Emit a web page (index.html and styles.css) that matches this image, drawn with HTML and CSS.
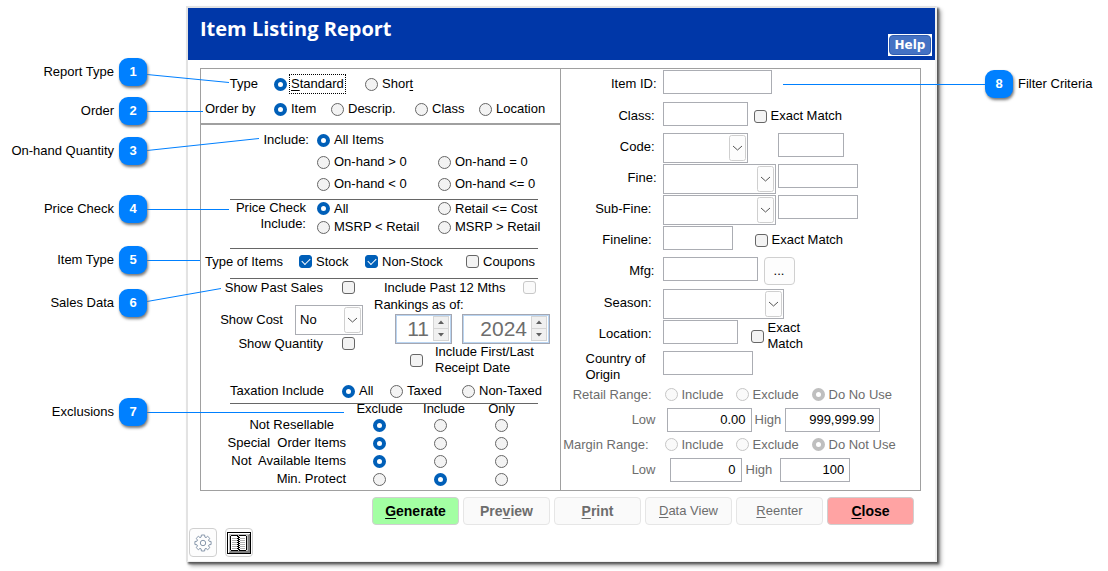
FILE: index.html
```html
<!DOCTYPE html>
<html lang="en">
<head>
<meta charset="utf-8">
<title>Item Listing Report</title>
<link rel="stylesheet" href="styles.css">
</head>
<body>
<main class="stage">
  <form class="window">
    <header class="titlebar">
      <h1 class="title">Item Listing Report</h1>
      <button type="button" class="help"><span class="help-face">Help</span></button>
    </header>

    <div class="panels">
      <div class="panel panel-left">
        <section class="order">
          <div class="row row-type">
            <span class="label right">Type</span>
            <label class="opt first"><input type="radio" name="type" checked><span class="focused"><u>S</u>tandard</span></label>
            <label class="opt"><input type="radio" name="type"><span>Shor<u>t</u></span></label>
          </div>
          <div class="row row-order">
            <span class="label">Order by</span>
            <label class="opt first"><input type="radio" name="order" checked><span>Item</span></label>
            <label class="opt"><input type="radio" name="order"><span>Descrip.</span></label>
            <label class="opt"><input type="radio" name="order"><span>Class</span></label>
            <label class="opt"><input type="radio" name="order"><span>Location</span></label>
          </div>
        </section>

        <section class="choices onhand">
          <span class="label right">Include:</span>
          <label class="opt"><input type="radio" name="onhand" checked><span>All Items</span></label>
          <label class="opt second-row"><input type="radio" name="onhand"><span>On-hand &gt; 0</span></label>
          <label class="opt"><input type="radio" name="onhand"><span>On-hand = 0</span></label>
          <label class="opt second-row"><input type="radio" name="onhand"><span>On-hand &lt; 0</span></label>
          <label class="opt"><input type="radio" name="onhand"><span>On-hand &lt;= 0</span></label>
        </section>
        <hr class="rule">

        <section class="choices price">
          <span class="label right price-label">Price Check<br>Include:</span>
          <label class="opt"><input type="radio" name="price" checked><span>All</span></label>
          <label class="opt"><input type="radio" name="price"><span>Retail &lt;= Cost</span></label>
          <label class="opt"><input type="radio" name="price"><span>MSRP &lt; Retail</span></label>
          <label class="opt"><input type="radio" name="price"><span>MSRP &gt; Retail</span></label>
        </section>
        <hr class="rule">

        <section class="row row-items">
          <span class="label">Type of Items</span>
          <label class="opt"><input type="checkbox" checked><span>Stock</span></label>
          <label class="opt"><input type="checkbox" checked><span>Non-Stock</span></label>
          <label class="opt"><input type="checkbox"><span>Coupons</span></label>
        </section>
        <hr class="rule">

        <section class="sales">
          <div class="sales-left">
            <label class="opt sales-check"><span>Show Past Sales</span><input type="checkbox"></label>
            <div class="cost">
              <label for="cost">Show Cost</label>
              <span class="combo w68">
                <select id="cost"><option>No</option><option>Yes</option></select>
                <svg class="chevron" viewBox="0 0 17 26" preserveAspectRatio="none" aria-hidden="true"><rect x=".5" y=".5" width="16" height="25" rx="2"/><path d="M4 11l4.500 4 4.500-4"/></svg>
              </span>
            </div>
            <label class="opt sales-check"><span>Show Quantity</span><input type="checkbox"></label>
          </div>
          <div class="sales-right">
            <label class="opt past"><span>Include Past 12 Mths</span><input type="checkbox" disabled></label>
            <span class="rankings">Rankings as of:</span>
            <div class="spinners">
              <span class="spin w57">
                <input type="text" value="11" aria-label="Ranking month" disabled>
                <svg viewBox="0 0 16 25" aria-hidden="true"><rect x=".5" y=".5" width="15" height="12"/><rect x=".5" y="12.500" width="15" height="12"/><path d="M5 8h6l-3-3.500zM5 17h6l-3 3.500z"/></svg>
              </span>
              <span class="spin w88">
                <input type="text" value="2024" aria-label="Ranking year" disabled>
                <svg viewBox="0 0 16 25" aria-hidden="true"><rect x=".5" y=".5" width="15" height="12"/><rect x=".5" y="12.500" width="15" height="12"/><path d="M5 8h6l-3-3.500zM5 17h6l-3 3.500z"/></svg>
              </span>
            </div>
            <label class="opt receipt"><input type="checkbox"><span>Include First/Last<br>Receipt Date</span></label>
          </div>
        </section>

        <section class="row row-tax">
          <span class="label right">Taxation Include</span>
          <label class="opt tax-first"><input type="radio" name="tax" checked><span>All</span></label>
          <label class="opt"><input type="radio" name="tax"><span>Taxed</span></label>
          <label class="opt"><input type="radio" name="tax"><span>Non-Taxed</span></label>
        </section>
        <hr class="rule">

        <table class="exclusions">
          <thead>
            <tr><td></td><th scope="col">Exclude</th><th scope="col" class="shifted">Include</th><th scope="col">Only</th></tr>
          </thead>
          <tbody>
            <tr><th scope="row" class="indent">Not Resellable</th><td><input type="radio" name="resell" aria-label="Exclude" checked></td><td><input type="radio" name="resell" aria-label="Include"></td><td><input type="radio" name="resell" aria-label="Only"></td></tr>
            <tr><th scope="row">Special&nbsp; Order Items</th><td><input type="radio" name="special" aria-label="Exclude" checked></td><td><input type="radio" name="special" aria-label="Include"></td><td><input type="radio" name="special" aria-label="Only"></td></tr>
            <tr><th scope="row">Not&nbsp; Available Items</th><td><input type="radio" name="avail" aria-label="Exclude" checked></td><td><input type="radio" name="avail" aria-label="Include"></td><td><input type="radio" name="avail" aria-label="Only"></td></tr>
            <tr><th scope="row">Min. Protect</th><td><input type="radio" name="protect" aria-label="Exclude"></td><td><input type="radio" name="protect" aria-label="Include" checked></td><td><input type="radio" name="protect" aria-label="Only"></td></tr>
          </tbody>
        </table>
      </div>

      <div class="panel panel-right">
        <div class="field tall">
          <label class="name flush" for="item-id">Item ID:</label>
          <input type="text" class="box w109" id="item-id">
        </div>
        <div class="field">
          <label class="name" for="class">Class:</label>
          <input type="text" class="box w85" id="class">
          <label class="opt gap6"><input type="checkbox"><span>Exact Match</span></label>
        </div>
        <div class="field">
          <label class="name" for="code">Code:</label>
          <span class="combo w85"><select id="code"></select><svg class="chevron" viewBox="0 0 17 26" preserveAspectRatio="none" aria-hidden="true"><rect x=".5" y=".5" width="16" height="25" rx="2"/><path d="M4 11l4.500 4 4.500-4"/></svg></span>
          <input type="text" class="box w66 gap30" aria-label="Code value">
        </div>
        <div class="field">
          <label class="name flush" for="fine">Fine:</label>
          <span class="combo w113"><select id="fine"></select><svg class="chevron" viewBox="0 0 17 26" preserveAspectRatio="none" aria-hidden="true"><rect x=".5" y=".5" width="16" height="25" rx="2"/><path d="M4 11l4.500 4 4.500-4"/></svg></span>
          <input type="text" class="box w80 gap2" aria-label="Fine value">
        </div>
        <div class="field">
          <label class="name inset" for="subfine">Sub-Fine:</label>
          <span class="combo w113"><select id="subfine"></select><svg class="chevron" viewBox="0 0 17 26" preserveAspectRatio="none" aria-hidden="true"><rect x=".5" y=".5" width="16" height="25" rx="2"/><path d="M4 11l4.500 4 4.500-4"/></svg></span>
          <input type="text" class="box w80 gap2" aria-label="Sub-Fine value">
        </div>
        <div class="field">
          <label class="name inset" for="fineline">Fineline:</label>
          <input type="text" class="box w70" id="fineline">
          <label class="opt gap22"><input type="checkbox"><span>Exact Match</span></label>
        </div>
        <div class="field tall">
          <label class="name" for="mfg">Mfg:</label>
          <input type="text" class="box w95" id="mfg">
          <button type="button" class="browse gap6" aria-label="Browse manufacturers">...</button>
        </div>
        <div class="field">
          <label class="name inset" for="season">Season:</label>
          <span class="combo w121"><select id="season"></select><svg class="chevron" viewBox="0 0 17 26" preserveAspectRatio="none" aria-hidden="true"><rect x=".5" y=".5" width="16" height="25" rx="2"/><path d="M4 11l4.500 4 4.500-4"/></svg></span>
        </div>
        <div class="field">
          <label class="name inset" for="location">Location:</label>
          <input type="text" class="box w75" id="location">
          <label class="opt stacked gap13"><input type="checkbox"><span>Exact<br>Match</span></label>
        </div>
        <div class="field">
          <label class="name country" for="country">Country of<br>Origin</label>
          <input type="text" class="box w90" id="country">
        </div>

        <div class="range-head">
          <span class="name inset">Retail Range:</span>
          <label class="opt"><input type="radio" name="retail" disabled><span>Include</span></label>
          <label class="opt"><input type="radio" name="retail" disabled><span>Exclude</span></label>
          <label class="opt"><input type="radio" name="retail" disabled checked><span>Do No Use</span></label>
        </div>
        <div class="range-row">
          <label class="low" for="retail-low">Low</label>
          <input type="text" class="box num w85" id="retail-low" value="0.00">
          <label class="high" for="retail-high">High</label>
          <input type="text" class="box num w95" id="retail-high" value="999,999.99">
        </div>
        <div class="range-head">
          <span class="name inset-more">Margin Range:</span>
          <label class="opt"><input type="radio" name="margin" disabled><span>Include</span></label>
          <label class="opt"><input type="radio" name="margin" disabled><span>Exclude</span></label>
          <label class="opt"><input type="radio" name="margin" disabled checked><span>Do Not Use</span></label>
        </div>
        <div class="range-row margin-row">
          <label class="low" for="margin-low">Low</label>
          <input type="text" class="box num w72" id="margin-low" value="0">
          <label class="high" for="margin-high">High</label>
          <input type="text" class="box num w70" id="margin-high" value="100">
        </div>
      </div>
    </div>

    <div class="actions">
      <button type="button" class="btn strong go"><u>G</u>enerate</button>
      <button type="button" class="btn strong muted">Pre<u>v</u>iew</button>
      <button type="button" class="btn strong muted"><u>P</u>rint</button>
      <button type="button" class="btn muted"><u>D</u>ata View</button>
      <button type="button" class="btn muted"><u>R</u>eenter</button>
      <button type="button" class="btn strong stop"><u>C</u>lose</button>
    </div>

    <div class="tools">
      <button type="button" class="tool" aria-label="Settings">
        <svg width="18" height="18" viewBox="0 0 18 18" aria-hidden="true">
          <path class="gear" d="M7.400 1h3.200l.3 2.100 1.100.5 1.700-1.300 2.100 2.100-1.300 1.700.5 1.100 2.100.3v3l-2.100.3-.5 1.100 1.300 1.700-2.100 2.100-1.700-1.300-1.100.5-.3 2.100H7.400l-.3-2.100-1.100-.5-1.700 1.300-2.100-2.100 1.300-1.700-.5-1.100L.9 10.500v-3l2.100-.3.5-1.100-1.300-1.700 2.100-2.100L6 3.600l1.100-.5z"/>
          <circle class="gear" cx="9" cy="9" r="2.700"/>
        </svg>
      </button>
      <button type="button" class="tool" aria-label="Open manual">
        <svg width="24" height="22" viewBox="0 0 24 22" shape-rendering="crispEdges" aria-hidden="true">
          <path d="M0 0h24v22H0z"/>
          <path fill="#c0c0c0" d="M1 1h22v20H1z"/>
          <path fill="#fff" d="M1 1h22l-1 1H2v18l-1 1z"/>
          <path fill="#808080" d="M23 1v20H1l2-2h18V3z"/>
          <path fill="#fff" d="M4 4h15v14H4z"/>
          <path fill="none" stroke="#000" d="M4 3.500h7M12 3.500h7M3.500 4v14M19.500 4v14M4 18.500h7M12 18.500h7"/>
          <path fill="none" stroke="#b0b0b0" d="M5 6.500h5M5 8.500h5M5 10.500h5M5 12.500h5M5 14.500h5M5 16.500h5M13 6.500h5M13 8.500h5M13 10.500h5M13 12.500h5M13 14.500h5M13 16.500h5"/>
          <path fill="none" stroke="#000" d="M11.500 4v14"/>
          <path fill="none" stroke="#000" stroke-dasharray="1 1" d="M12.500 5v13M10.500 4v13"/>
        </svg>
      </button>
    </div>
  </form>

  <svg class="leaders leaders-left" width="350" height="430" aria-hidden="true">
    <path d="M147 74.500L229 82.500M147 111.500H203M147 150.500L259 138.500M147 209.500H229M147 260.500H200M147 301.500L221 288.500M147 412.500H344"/>
  </svg>
  <svg class="leaders leaders-right" width="325" height="100" aria-hidden="true">
    <path d="M0 84.500H203"/>
  </svg>
  <div class="callout c1">Report Type<b class="badge">1</b></div>
  <div class="callout c2">Order<b class="badge">2</b></div>
  <div class="callout c3">On-hand Quantity<b class="badge">3</b></div>
  <div class="callout c4">Price Check<b class="badge">4</b></div>
  <div class="callout c5">Item Type<b class="badge">5</b></div>
  <div class="callout c6">Sales Data<b class="badge">6</b></div>
  <div class="callout c7">Exclusions<b class="badge">7</b></div>
  <div class="callout c8"><b class="badge">8</b>Filter Criteria</div>
</main>
</body>
</html>
```
FILE: styles.css
```css
* { box-sizing: border-box; }

body {
  margin: 0;
  background: #fff;
  color: #000;
  font: 13px/16px "Liberation Sans", Arial, sans-serif;
}

button, input, select { font: inherit; color: inherit; margin: 0; }
u { text-underline-offset: 2px; }

/* The window sits between two gutters that hold the callouts. */
.stage { position: relative; padding: 6px 171px 8px 186px; }

.window {
  border: 2px solid #e3e3e3;
  border-right: 2px solid #f0f0f0;
  border-bottom: 1px solid #f0f0f0;
  box-shadow: 2px 2px 2px #555, 4px 4px 4px #aaa;
}

.titlebar {
  display: flex;
  justify-content: space-between;
  align-items: flex-start;
  height: 52px;
  padding: 7px 3px 4px 12px;
  background: #0037a8;
}
.title {
  margin: 0;
  color: #fff;
  font: bold 20px/28px "Open Sans", "Noto Sans", sans-serif;
}
.help {
  align-self: flex-end;
  padding: 1px;
  border: 0;
  background: #fff;
}
.help-face {
  display: block;
  width: 42px;
  border: 1px solid #2f5cb0;
  border-radius: 4px;
  background: #4472c4;
  color: #fff;
  font: bold 12px/18px "DejaVu Sans", sans-serif;
  text-align: center;
}

.panels {
  display: grid;
  grid-template-columns: 1fr 1fr;
  margin: 8px 14px 0 12px;
  border: 1px solid #a0a0a0;
}
.panel-left { border-right: 1px solid #a0a0a0; }

/* Radio buttons and tick boxes */
input[type="radio"], input[type="checkbox"] {
  appearance: none;
  flex: none;
  display: block;
  width: 13px;
  height: 13px;
  border: 1px solid #666;
  background: #f3f3f3;
}
input[type="radio"] { border-radius: 50%; }
input[type="radio"]:checked { border: 4px solid #005fb8; background: #fff; }
input[type="radio"]:disabled { border-color: #c6c6c6; background: #fafafa; }
input[type="radio"]:disabled:checked { border-color: #bfbfbf; background: #fff; }
input[type="checkbox"] { border-radius: 3px; }
input[type="checkbox"]:disabled { border-color: #c8c8c8; background: #fafafa; }
input[type="checkbox"]:checked { border-color: #005fb8; background: #005fb8; }
input[type="checkbox"]:checked::after {
  content: "";
  display: block;
  width: 7px;
  height: 4px;
  margin: 2px 0 0 2px;
  border: solid #fff;
  border-width: 0 0 1px 1px;
  transform: rotate(-45deg);
}

.opt { display: flex; align-items: center; gap: 4px; white-space: nowrap; }
.focused { margin-left: -2px; padding: 1px; border: 1px dotted #000; }

.label { white-space: nowrap; padding-left: 4px; }
.right { text-align: right; }
.row { display: grid; align-items: center; }

.rule { width: 308px; height: 1px; margin: 0 0 0 29px; border: 0; background: #666; }

.order { padding: 3px 0 1px; border-bottom: 2px solid #a0a0a0; }
.row-type { grid-template-columns: 57px 107px 1fr; height: 24px; }
.row-order { grid-template-columns: 57px 73px 84px 64px 1fr; height: 26px; }
.first { padding-left: 16px; }

.choices {
  display: grid;
  grid-template-columns: 108px 113px 1fr;
  column-gap: 8px;
  align-items: center;
}
.onhand { grid-auto-rows: 22px; padding: 4px 0; }
.second-row { grid-column: 2; }
.price { grid-template-rows: 17px 20px; padding-bottom: 11px; }
.price-label { grid-row: 1 / 3; align-self: start; padding-right: 3px; }

.row-items { grid-template-columns: 98px 66px 101px 1fr; height: 29px; padding-bottom: 4px; }
.row-tax { grid-template-columns: 123px 66px 72px 1fr; height: 24px; }
.tax-first { padding-left: 18px; }

.sales { display: grid; grid-template-columns: 173px 1fr; }
.sales-left { display: flex; flex-direction: column; align-items: flex-start; }
.sales-check { justify-content: flex-end; gap: 19px; width: 154px; height: 17px; }
.cost { display: flex; align-items: flex-end; justify-content: flex-end; gap: 12px; width: 162px; height: 39px; }
.cost label { line-height: 30px; }
.sales-right { padding-bottom: 3px; }
.past { gap: 18px; height: 17px; padding-left: 10px; }
.rankings { display: block; line-height: 18px; }
.spinners { display: flex; gap: 10px; padding-left: 21px; }
.receipt { gap: 12px; padding-left: 36px; }

.spin { position: relative; display: block; height: 30px; }
.spin input {
  width: 100%;
  height: 100%;
  padding: 0 22px 0 0;
  border: 1px solid #a5a7b2;
  border-radius: 0;
  outline: 1px solid #b9d5f2;
  outline-offset: -2px;
  background: #fff;
  color: #6d6d6d;
  font-size: 21px;
  text-align: right;
}
.spin svg { position: absolute; top: 2px; right: 3px; width: 16px; height: 25px; fill: #f0f0f0; stroke: #d5d5d5; }
.spin path { fill: #606060; stroke: none; }

.combo { position: relative; display: block; height: 30px; }
.combo select {
  appearance: none;
  display: block;
  width: 100%;
  height: 100%;
  padding: 0 20px 0 4px;
  border: 1px solid #abadb3;
  border-radius: 0;
  background: #fff;
}
.chevron {
  position: absolute;
  top: 2px;
  right: 2px;
  width: 17px;
  height: 26px;
  fill: #fdfdfd;
  stroke: #cfcfcf;
  pointer-events: none;
}
.chevron path { fill: none; stroke: #555; }

.exclusions { width: 331px; table-layout: fixed; border-collapse: collapse; line-height: 12px; }
.exclusions th, .exclusions td { padding: 0; font-weight: normal; text-align: center; white-space: nowrap; }
.exclusions thead { line-height: 10px; }
.exclusions thead th { vertical-align: top; }
.exclusions thead tr { height: 12px; }
.exclusions thead td { width: 148px; }
.exclusions thead .shifted { padding-left: 7px; }
.exclusions tbody tr { height: 18px; }
.exclusions tbody th { padding-right: 3px; text-align: right; }
.exclusions tbody .indent { padding-right: 15px; }
.exclusions input { margin: 0 auto; }

/* Filter fields */
.panel-right { padding: 1px 0 8px; }
.field { display: flex; align-items: flex-start; height: 31px; }
.tall { height: 32px; }
.name { flex: none; width: 94px; margin-right: 8px; text-align: right; white-space: nowrap; }
.flush { width: 96px; margin-right: 6px; }
.field .name { line-height: 28px; }
.field .country { padding-left: 25px; line-height: 16px; text-align: left; }
.inset { padding-right: 3px; }
.inset-more { padding-right: 6px; }
.field .opt { height: 28px; }
.field .stacked { height: 32px; }

.box {
  height: 24px;
  padding: 0 5px;
  border: 1px solid #abadb3;
  border-radius: 0;
  background: #fff;
}
.num { text-align: right; }
.browse {
  width: 31px;
  height: 28px;
  padding: 0;
  border: 1px solid #d0d0d0;
  border-radius: 4px;
  background: #fdfdfd;
}

.range-head, .range-row { display: flex; align-items: center; height: 25px; color: #6d6d6d; }
.range-head { display: grid; grid-template-columns: 104px 71px 76px 1fr; }
.range-row .box { color: #000; }
.low { width: 95px; margin-right: 11px; text-align: right; }
.high { margin: 0 4px 0 3px; }
.margin-row .low { margin-right: 14px; }
.margin-row .high { margin: 0 8px 0 4px; }

.w57 { width: 57px; }
.w66 { width: 66px; }
.w68 { width: 68px; }
.w70 { width: 70px; }
.w72 { width: 72px; }
.w75 { width: 75px; }
.w80 { width: 80px; }
.w85 { width: 85px; }
.w88 { width: 88px; }
.w90 { width: 90px; }
.w95 { width: 95px; }
.w109 { width: 109px; }
.w113 { width: 113px; }
.w121 { width: 121px; }
.gap2 { margin-left: 2px; }
.gap6 { margin-left: 6px; }
.gap13 { margin-left: 13px; }
.gap22 { margin-left: 22px; }
.gap30 { margin-left: 30px; }

.actions { display: flex; justify-content: flex-end; gap: 4px; margin: 6px 21px 0 0; }
.btn {
  width: 87px;
  height: 28px;
  padding: 0;
  border: 1px solid #d0d0d0;
  border-radius: 4px;
  background: #fafafa;
}
.strong { font-weight: bold; font-size: 14px; }
.muted { border-color: #e6e6e6; color: #6d6d6d; }
.go { background: #a3ffa3; }
.stop { background: #ffa3a3; }

.tools { display: flex; gap: 8px; padding: 3px 0 4px 1px; }
.tool {
  display: grid;
  place-items: center;
  width: 28px;
  height: 29px;
  padding: 0;
  border: 1px solid #d0d0d0;
  border-radius: 4px;
  background: #fdfdfd;
}
.gear { fill: none; stroke: #8797ab; stroke-linejoin: round; }

/* Numbered callouts laid over the window */
.leaders { position: absolute; top: 0; fill: none; stroke: #0080ff; pointer-events: none; }
.leaders-left { left: 0; }
.leaders-right { right: 0; }
.callout {
  position: absolute;
  left: 0;
  display: flex;
  align-items: center;
  justify-content: flex-end;
  gap: 5px;
  width: 147px;
  white-space: nowrap;
}
.badge {
  width: 28px;
  height: 28px;
  border-radius: 9px;
  background: #0080ff;
  box-shadow: 1px 2px 3px #777;
  color: #fff;
  line-height: 28px;
  text-align: center;
}
.c1 { top: 58px; }
.c2 { top: 97px; }
.c3 { top: 137px; }
.c4 { top: 195px; }
.c5 { top: 246px; }
.c6 { top: 289px; }
.c7 { top: 398px; }
.c8 { top: 70px; right: 0; left: auto; justify-content: flex-start; width: 123px; }
```
